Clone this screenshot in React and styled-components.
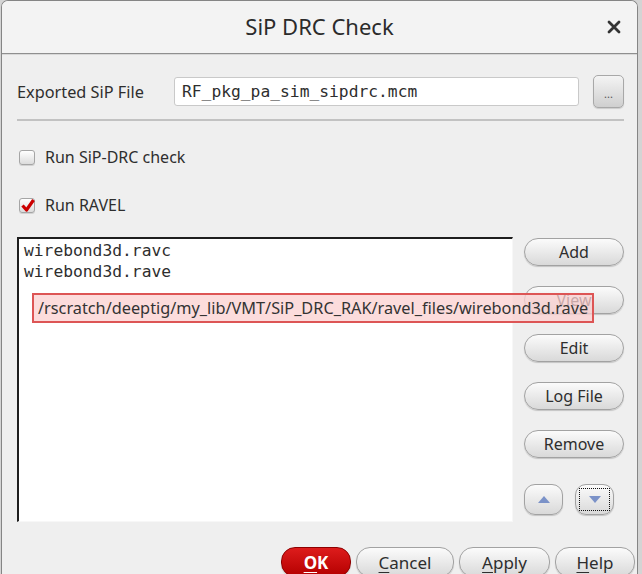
import React from "react";
import styled, { createGlobalStyle, css } from "styled-components";

const Global = createGlobalStyle`
  html, body {
    margin: 0;
    padding: 0;
    background: #d4d4d4;
    font-family: "Noto Sans", "Open Sans", sans-serif;
    color: #2e2e2e;
  }
`;

const Window = styled.div`
  width: 637px;
  height: 574px;
  margin-left: 1px;
  border: 1px solid #858585;
  border-bottom: none;
  border-radius: 7px 7px 0 0;
  background: #efefef;
  overflow: hidden;
  box-sizing: border-box;
`;

const TitleBar = styled.div`
  height: 52px;
  display: grid;
  grid-template-columns: 1fr auto 1fr;
  align-items: center;
  background: #f3f3f3;
  border-bottom: 1px solid #8f8f8f;
  box-shadow: 0 1px 0 #d8d8d8;
`;

const Title = styled.div`
  grid-column: 2;
  font-size: 22px;
  color: #2b2b2b;
  margin-top: -2px;
`;

const Close = styled.div`
  justify-self: end;
  margin-right: 16px;
  width: 14px;
  height: 14px;
  display: flex;
`;

const Body = styled.div`
  padding: 0 0 0 15px;
`;

const FileRow = styled.div`
  display: flex;
  align-items: center;
  margin-top: 21px;
  height: 33px;
  padding-right: 13px;
`;

const Label = styled.div`
  width: 157px;
  font-size: 16.3px;
`;

const mono = css`
  font-family: "DejaVu Sans Mono", "Liberation Mono", monospace;
  font-size: 16.3px;
`;

const FileInput = styled.div`
  flex: 1;
  height: 29px;
  box-sizing: border-box;
  background: #fff;
  border: 1px solid #c9c9c9;
  border-radius: 3px;
  display: flex;
  align-items: center;
  padding-left: 7px;
  ${mono}
`;

const DotsButton = styled.div`
  width: 31px;
  height: 33px;
  margin-left: 14px;
  box-sizing: border-box;
  border: 1px solid #a8a8a8;
  border-radius: 5px;
  background: linear-gradient(#f4f4f4, #cfcfcf);
  box-shadow: 0 1px 1px rgba(0, 0, 0, 0.15);
  display: flex;
  align-items: center;
  justify-content: center;
  font-size: 11px;
  color: #555;
  padding-top: 4px;
`;

const Divider = styled.div`
  height: 2px;
  margin: 11px 13px 0 0;
  background: #c2c2c2;
`;

const CheckRow = styled.div`
  height: 48px;
  display: flex;
  align-items: center;
  gap: 10px;
  padding-left: 2px;
  font-size: 16px;
  margin-top: ${(p) => p.$top || 0}px;
`;

const Box = styled.div`
  width: 16px;
  height: 15px;
  box-sizing: border-box;
  border: 1px solid #a5a5a5;
  border-radius: 3px;
  background: linear-gradient(#ffffff, #dcdcdc);
  box-shadow: 0 1px 0 rgba(0, 0, 0, 0.12);
  position: relative;
`;

const Tick = styled.svg`
  position: absolute;
  left: 1px;
  top: 0px;
`;

const Main = styled.div`
  display: flex;
  margin-top: 8px;
`;

const ListBox = styled.div`
  position: relative;
  width: 496px;
  height: 285px;
  box-sizing: border-box;
  background: #fff;
  border-top: 2px solid #1e1e1e;
  border-left: 2px solid #1e1e1e;
  border-right: 1px solid #f7f7f7;
  border-bottom: 1px solid #f7f7f7;
  padding: 1px 0 0 5px;
  ${mono}
`;

const ListItem = styled.div`
  height: 21px;
  line-height: 21px;
`;

const Tip = styled.div`
  position: absolute;
  left: 13px;
  top: 54px;
  width: 562px;
  height: 30px;
  box-sizing: border-box;
  border: 2px solid #dd5555;
  background: rgba(251, 208, 208, 0.75);
  z-index: 2;
  display: flex;
  align-items: center;
  padding-left: 4px;
  font-family: "Noto Sans", "Open Sans", sans-serif;
  font-size: 16.3px;
  color: #333;
  white-space: nowrap;
`;

const SideColumn = styled.div`
  display: flex;
  flex-direction: column;
  gap: 20px;
  margin-left: 11px;
  padding-top: 1px;
`;

const pill = css`
  box-sizing: border-box;
  border: 1px solid #a2a2a2;
  background: linear-gradient(#fbfbfb, #d9d9d9);
  box-shadow: 0 1px 1px rgba(0, 0, 0, 0.18);
  display: flex;
  align-items: center;
  justify-content: center;
  font-size: 16px;
  color: #2e2e2e;
`;

const SideButton = styled.div`
  ${pill}
  width: 100px;
  height: 28px;
  border-radius: 14px;
`;

const ArrowRow = styled.div`
  display: flex;
  gap: 12px;
  margin-top: 6px;
`;

const ArrowButton = styled.div`
  ${pill}
  width: 39px;
  height: 31px;
  border-radius: 11px;
  position: relative;
  ${(p) =>
    p.$focus &&
    css`
      &::after {
        content: "";
        position: absolute;
        inset: 3px;
        border: 1px dotted #111;
      }
    `}
`;

const Footer = styled.div`
  display: flex;
  justify-content: flex-end;
  gap: 5px;
  margin-top: 25px;
  padding-right: 2px;
`;

const FootButton = styled.div`
  ${pill}
  height: 30px;
  width: ${(p) => p.$w}px;
  border-radius: 14px;
  font-size: 17px;
  ${(p) =>
    p.$primary &&
    css`
      background: linear-gradient(#dd1c1c, #b50000);
      border-color: #8e0000;
      color: #fff;
      font-weight: 700;
    `}
  u {
    text-decoration-thickness: 1px;
    text-underline-offset: 3px;
  }
`;

function CloseIcon() {
  return (
    <svg width="14" height="14" viewBox="0 0 14 14">
      <path d="M2 2 L12 12 M12 2 L2 12" stroke="#333" strokeWidth="2.8" strokeLinecap="round" />
    </svg>
  );
}

function Triangle({ down }) {
  return (
    <svg width="12" height="7" viewBox="0 0 12 7">
      <path d={down ? "M0 0 H12 L6 7 Z" : "M0 7 H12 L6 0 Z"} fill="#7b92c8" />
    </svg>
  );
}

export default function App() {
  return (
    <>
      <Global />
      <Window>
        <TitleBar>
          <Title>SiP DRC Check</Title>
          <Close>
            <CloseIcon />
          </Close>
        </TitleBar>
        <Body>
          <FileRow>
            <Label>Exported SiP File</Label>
            <FileInput>RF_pkg_pa_sim_sipdrc.mcm</FileInput>
            <DotsButton>...</DotsButton>
          </FileRow>
          <Divider />
          <CheckRow $top={12}>
            <Box />
            Run SiP-DRC check
          </CheckRow>
          <CheckRow>
            <Box>
              <Tick width="14" height="13" viewBox="0 0 14 13">
                <path d="M1.5 6.5 L5.5 11 L12.5 1" fill="none" stroke="#cc0000" strokeWidth="3.2" strokeLinejoin="round" />
              </Tick>
            </Box>
            Run RAVEL
          </CheckRow>
          <Main>
            <ListBox>
              <ListItem>wirebond3d.ravc</ListItem>
              <ListItem>wirebond3d.rave</ListItem>
              <Tip>/rscratch/deeptig/my_lib/VMT/SiP_DRC_RAK/ravel_files/wirebond3d.rave</Tip>
            </ListBox>
            <SideColumn>
              <SideButton>Add</SideButton>
              <SideButton>View</SideButton>
              <SideButton>Edit</SideButton>
              <SideButton>Log File</SideButton>
              <SideButton>Remove</SideButton>
              <ArrowRow>
                <ArrowButton>
                  <Triangle />
                </ArrowButton>
                <ArrowButton $focus>
                  <Triangle down />
                </ArrowButton>
              </ArrowRow>
            </SideColumn>
          </Main>
          <Footer>
            <FootButton $primary $w={70}>
              <span><u>O</u>K</span>
            </FootButton>
            <FootButton $w={98}>
              <span><u>C</u>ancel</span>
            </FootButton>
            <FootButton $w={91}>
              <span><u>A</u>pply</span>
            </FootButton>
            <FootButton $w={80}>
              <span><u>H</u>elp</span>
            </FootButton>
          </Footer>
        </Body>
      </Window>
    </>
  );
}
